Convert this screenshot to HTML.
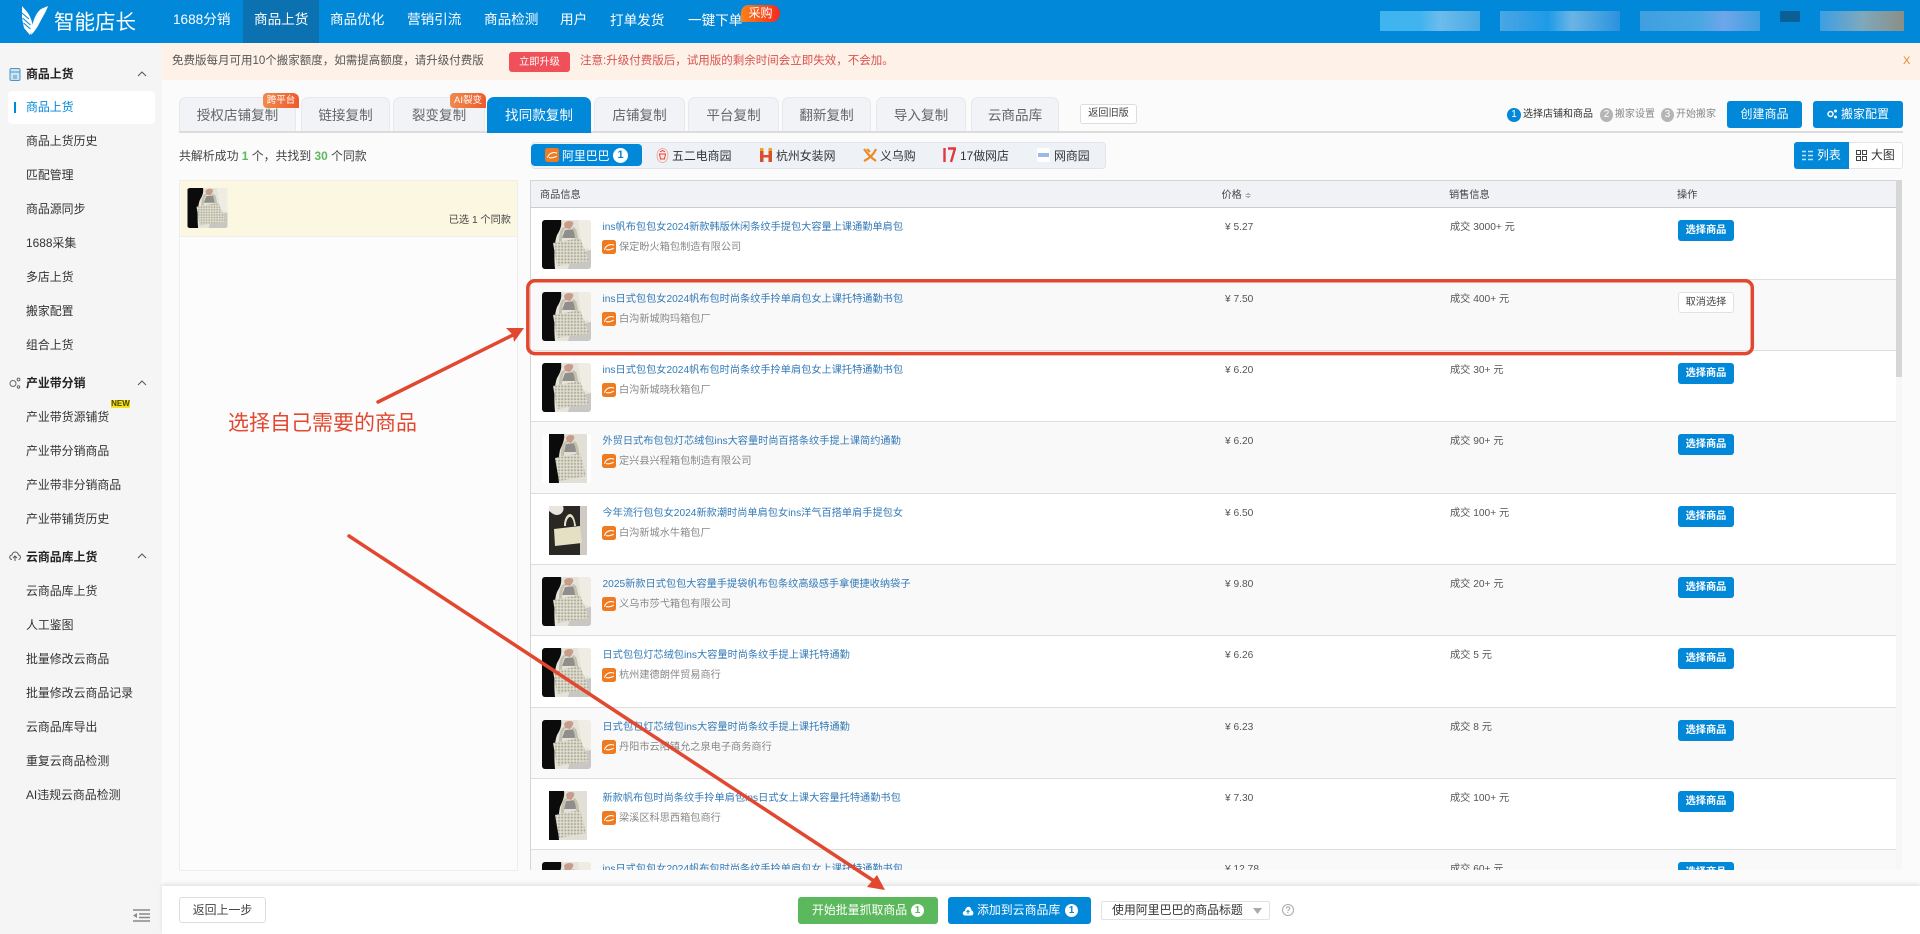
<!DOCTYPE html>
<html lang="zh-CN"><head><meta charset="utf-8"><title>智能店长</title>
<style>
*{box-sizing:border-box}
html,body{margin:0;padding:0;width:1920px;height:934px;overflow:hidden;background:#fbfbfb}
body{font-family:"Liberation Sans","Noto Sans CJK SC",sans-serif;font-size:12px;color:#333;position:relative}
.a,.a *{white-space:nowrap}
.a{position:absolute}
#hd{left:0;top:0;width:1920px;height:43px;background:#0288d9}
.n{color:#fff;font-size:13.6px;line-height:20px;top:10px}
.bl{top:11px;height:20px}
#sb{left:0;top:43px;width:162px;height:891px;background:#f5f5f5}
.s{left:26px;line-height:16px;font-size:11.9px;color:#333}
.g{font-weight:bold;color:#222}
.tab{top:97px;height:34px;background:#f1f3f6;border:1px solid #e6e8ec;border-bottom:none;border-radius:7px 7px 0 0;text-align:center;line-height:36px;font-size:13.6px;color:#666}
.tb{color:#fff;font-size:9.5px;line-height:15px;height:15px;text-align:center;border-radius:4px 6px 0 4px;background:linear-gradient(90deg,#f08a4e,#ee5b2c);top:93px}
.cir{border-radius:50%;text-align:center;color:#fff}
.btn{background:#0288d9;color:#fff;text-align:center;border-radius:3px}
.pt{top:149px;line-height:16px;font-size:11.9px;color:#333}
.r{left:0;width:1365px;height:71.33px;border-bottom:1px solid #ddd;background:#fff}
.r.o{background:#f9f9f9}
.r .t{position:absolute;left:71.5px;top:13px;line-height:14px;font-size:10.2px;color:#337ab7}
.r .sh{position:absolute;left:88px;top:33px;line-height:14px;font-size:10.2px;color:#888}
.r .ic{position:absolute;left:71px;top:32px;width:14px;height:14px}
.r .p{position:absolute;left:694px;top:13px;line-height:14px;font-size:10.2px;color:#555}
.r .v{position:absolute;left:919px;top:13px;line-height:14px;font-size:10.2px;color:#555}
.r .b{position:absolute;left:1147px;top:12px;width:56px;height:21px;line-height:21px;text-align:center;font-size:10.2px;color:#fff;background:#0288d9;border-radius:3px;font-weight:bold}
.r .b.c{background:#fff;color:#444;border:1px solid #e2e2e2;line-height:19px;font-weight:normal}
.r svg.th{position:absolute;left:11px;top:12px;width:49px;height:49px;border-radius:3px}
.hh{line-height:14px;font-size:10.2px;color:#444;position:absolute;top:7.5px}
</style></head><body>
<svg width="0" height="0" style="position:absolute"><defs>
<pattern id="dt" width="3.2" height="3.2" patternUnits="userSpaceOnUse"><rect width="3.2" height="3.2" fill="#d8d6c6"/><circle cx="1" cy="1" r=".9" fill="#a8a694"/><circle cx="2.6" cy="2.6" r=".5" fill="#efeee2"/></pattern>
<symbol id="bag" viewBox="0 0 49 49"><rect width="49" height="49" fill="#e6e3da"/><path d="M36 0h13v30l-9-4z" fill="#efece4"/><path d="M30 34l19-4v19H26z" fill="#c9c7c3"/><path d="M0 0h19c1 6-1 10-4 15-3 8-3 22-2 34H0z" fill="#0c0b0b"/><path d="M20 18l3-8 11-1 2 9z" fill="#8f8e8a"/><path d="M17 22c0-8 1-13 5-15l2 1c-3 2-4 7-4 14zM33 20c0-5-1-9-3-12l2-1c3 3 4 8 4 13z" fill="#c4c1ae"/><path d="M22 4c1-3 6-4 9-2 1 2-1 5-3 7l-5-1z" fill="#c79c8b"/><path d="M11 23l27-5 9 23-32 5z" fill="url(#dt)"/></symbol>
<symbol id="bagb" viewBox="0 0 49 49"><rect width="49" height="49" fill="#fff"/><rect x="7" width="38" height="49" fill="#e2dfd6"/><path d="M7 0h15c1 6-2 11-4 16-2 9-2 22-1 33H7z" fill="#0c0b0b"/><path d="M22 18l2-8 9-1 2 9z" fill="#8f8e8a"/><path d="M19 22c0-8 1-13 5-15l2 1c-3 2-4 7-4 14zM34 20c0-5-1-9-3-12l2-1c3 3 4 8 4 13z" fill="#c4c1ae"/><path d="M24 4c1-3 5-4 8-2 1 2-1 5-3 7l-4-1z" fill="#c79c8b"/><path d="M13 24l25-5 6 23-27 5z" fill="url(#dt)"/></symbol>
<symbol id="bagc" viewBox="0 0 49 49"><rect width="49" height="49" fill="#fff"/><rect x="7" width="38" height="49" fill="#2a2825"/><rect x="38" width="7" height="49" fill="#cfcac2"/><path d="M7 0h14c2 5-2 9-6 9-4 0-6-3-8-4z" fill="#e9e4dc"/><path d="M22 20c0-7 3-12 6-12s5 5 6 12h-2c0-5-2-9-4-9s-4 4-4 9z" fill="#e5dfc8"/><path d="M12 23l26-3 2 17-27 3z" fill="#e5dfc4"/></symbol>
<symbol id="ali" viewBox="0 0 14 14"><rect width="14" height="14" rx="2.5" fill="#f07a20"/><path d="M2.6 9.4C3.6 6 7 4.2 10 4.6c1 .1 1.6.5 1.6.5M4.4 9.6c2 .6 4.4.1 7-1.3" fill="none" stroke="#fff" stroke-width="1.1" stroke-linecap="round"/></symbol>
</defs></svg>

<div class="a" id="hd"></div>
<svg class="a" style="left:0;top:0" width="50" height="43" viewBox="0 0 50 43"><path d="M22 6l6 7c3 5 5 11 5 16l-3 6-6-7-2-10z" fill="#fff"/><path d="M22 13l7 6M22.500 18l8 7M23.500 23l7 6" stroke="#0288d9" stroke-width="1"/><path d="M48 6l-7 3c-5 4-8 11-9 19l-1 7c3-3 6-7 8-11 3-6 7-12 9-18z" fill="#fff"/></svg>
<div class="a" style="left:54px;top:9px;line-height:28px;font-size:20.5px;color:#fff">智能店长</div>
<div class="a" style="left:243px;top:0;width:76px;height:43px;background:#0b71b1"></div>
<div class="a n" style="left:173px">1688分销</div>
<div class="a n" style="left:254px">商品上货</div>
<div class="a n" style="left:330px">商品优化</div>
<div class="a n" style="left:407px">营销引流</div>
<div class="a n" style="left:484px">商品检测</div>
<div class="a n" style="left:560px">用户</div>
<div class="a n" style="left:610px;top:11px">打单发货</div>
<div class="a n" style="left:688px;top:11px">一键下单</div>
<div class="a" style="left:741px;top:5px;width:39px;height:17px;border-radius:8px 9px 9px 0;background:linear-gradient(90deg,#f8821a,#f52a1e);color:#fff;font-size:12px;line-height:16px;text-align:center">采购</div>
<div class="a bl" style="left:1380px;width:100px;background:linear-gradient(90deg,#3fb4ee 0,#3fb4ee 40%,#6cbcec 60%,#4aa9e3 100%)"></div>
<div class="a bl" style="left:1500px;width:120px;background:linear-gradient(90deg,#4aa6e4,#1f9ae6 40%,#6bb5e5 60%,#2a92de)"></div>
<div class="a bl" style="left:1640px;width:120px;background:linear-gradient(90deg,#3f9fe0,#49a7e3 50%,#6fa6ea 70%,#3f9fe0)"></div>
<div class="a" style="left:1780px;top:11px;width:20px;height:11px;background:#0a5f96"></div>
<div class="a bl" style="left:1820px;width:84px;background:linear-gradient(90deg,#3c9fe3,#7fa8bd 50%,#8a8f86)"></div>

<div class="a" id="sb"></div>
<svg class="a" style="left:9px;top:68px" width="12" height="13" viewBox="0 0 12 13"><rect x="1" y=".5" width="10" height="12" rx="1.5" fill="#cfe3f3" stroke="#4a94c9"/><path d="M1 4h10M4 8h4M4 10h4" stroke="#4a94c9"/></svg>
<div class="a s g" style="top:66px">商品上货</div>
<svg class="a" style="left:137px;top:71px" width="10" height="6"><path d="M1 5l4-4 4 4" fill="none" stroke="#555"/></svg>
<div class="a" style="left:8px;top:91px;width:147px;height:33px;background:#fff;border-radius:4px"></div>
<div class="a" style="left:14px;top:102px;width:2px;height:11px;background:#0288d9"></div>
<div class="a s" style="top:99px;color:#0288d9">商品上货</div>
<div class="a s" style="top:133px">商品上货历史</div>
<div class="a s" style="top:167px">匹配管理</div>
<div class="a s" style="top:201px">商品源同步</div>
<div class="a s" style="top:235px">1688采集</div>
<div class="a s" style="top:269px">多店上货</div>
<div class="a s" style="top:303px">搬家配置</div>
<div class="a s" style="top:337px">组合上货</div>
<svg class="a" style="left:9px;top:377px" width="12" height="12" viewBox="0 0 12 12"><circle cx="4" cy="6.500" r="3" fill="none" stroke="#666"/><circle cx="9.500" cy="2.500" r="1.400" fill="none" stroke="#666"/><circle cx="9.500" cy="10" r="1.200" fill="none" stroke="#666"/></svg>
<div class="a s g" style="top:375px">产业带分销</div>
<svg class="a" style="left:137px;top:380px" width="10" height="6"><path d="M1 5l4-4 4 4" fill="none" stroke="#555"/></svg>
<div class="a s" style="top:409px">产业带货源铺货</div>
<div class="a" style="left:111px;top:400px;width:19px;height:8px;background:#f7e21b;color:#4a4400;font-size:8px;line-height:8px;font-weight:bold;text-align:center">NEW</div>
<div class="a s" style="top:443px">产业带分销商品</div>
<div class="a s" style="top:477px">产业带非分销商品</div>
<div class="a s" style="top:511px">产业带铺货历史</div>
<svg class="a" style="left:9px;top:550px" width="12" height="12" viewBox="0 0 12 12"><path d="M3 9.500C0 9.500 0 5 3 5c.5-4 6-4 6.500 0 2.500 0 2.500 4.500 0 4.500M6 11V6M4 8l2-2 2 2" fill="none" stroke="#555"/></svg>
<div class="a s g" style="top:549px">云商品库上货</div>
<svg class="a" style="left:137px;top:553px" width="10" height="6"><path d="M1 5l4-4 4 4" fill="none" stroke="#555"/></svg>
<div class="a s" style="top:583px">云商品库上货</div>
<div class="a s" style="top:617px">人工鉴图</div>
<div class="a s" style="top:651px">批量修改云商品</div>
<div class="a s" style="top:685px">批量修改云商品记录</div>
<div class="a s" style="top:719px">云商品库导出</div>
<div class="a s" style="top:753px">重复云商品检测</div>
<div class="a s" style="top:787px">AI违规云商品检测</div>
<svg class="a" style="left:133px;top:909px" width="17" height="13" viewBox="0 0 17 13"><path d="M0 1h17M6 5h11M6 8.500h11M0 12h17" stroke="#8a8a8a" stroke-width="1.500"/><path d="M4 4v5L0 6.500z" fill="#8a8a8a"/></svg>

<div class="a" style="left:162px;top:43px;width:1758px;height:37px;background:#fdf1e8"></div>
<div class="a" style="left:172px;top:53px;line-height:16px;font-size:11.500px;color:#555">免费版每月可用10个搬家额度，如需提高额度，请升级付费版</div>
<div class="a" style="left:509px;top:52px;width:61px;height:20px;background:#f0505a;border-radius:3px;color:#fff;font-size:10.200px;line-height:21px;text-align:center">立即升级</div>
<div class="a" style="left:580px;top:53px;line-height:16px;font-size:11.500px;color:#d9534f">注意:升级付费版后，试用版的剩余时间会立即失效，不会加。</div>
<div class="a" style="left:1903px;top:53px;line-height:16px;font-size:11px;color:#e8862e">X</div>

<div class="a" style="left:179px;top:131px;width:1724px;height:2px;background:#dcdcdc"></div>
<div class="a tab" style="left:179px;width:117px">授权店铺复制</div>
<div class="a tab" style="left:301px;width:89px">链接复制</div>
<div class="a tab" style="left:393px;width:92px">裂变复制</div>
<div class="a tab" style="left:487px;width:104px;height:36px;background:#0288d9;border-color:#0288d9;color:#fff">找同款复制</div>
<div class="a tab" style="left:594px;width:91px">店铺复制</div>
<div class="a tab" style="left:688px;width:91px">平台复制</div>
<div class="a tab" style="left:782px;width:89px">翻新复制</div>
<div class="a tab" style="left:876px;width:90px">导入复制</div>
<div class="a tab" style="left:971px;width:88px">云商品库</div>
<div class="a tb" style="left:263px;width:36px">跨平台</div>
<div class="a tb" style="left:450px;width:36px">AI裂变</div>
<div class="a" style="left:1080px;top:104px;width:57px;height:20px;background:#fff;border:1px solid #ddd;border-radius:3px;font-size:10.200px;line-height:18px;text-align:center;color:#444">返回旧版</div>

<div class="a cir" style="left:1507px;top:108px;width:14px;height:14px;background:#0288d9;font-size:10px;line-height:14px">1</div>
<div class="a" style="left:1523px;top:108px;line-height:14px;font-size:10px;color:#333">选择店铺和商品</div>
<div class="a cir" style="left:1600px;top:108px;width:13px;height:14px;background:#b5b5b5;font-size:10px;line-height:14px">2</div>
<div class="a" style="left:1615px;top:108px;line-height:14px;font-size:10px;color:#888">搬家设置</div>
<div class="a cir" style="left:1661px;top:108px;width:13px;height:14px;background:#b5b5b5;font-size:10px;line-height:14px">3</div>
<div class="a" style="left:1676px;top:108px;line-height:14px;font-size:10px;color:#888">开始搬家</div>
<div class="a btn" style="left:1727px;top:101px;width:75px;height:27px;line-height:27px">创建商品</div>
<div class="a btn" style="left:1813px;top:101px;width:90px;height:27px;line-height:27px"><svg width="11" height="10" viewBox="0 0 11 10" style="vertical-align:-1px;margin-right:3px"><circle cx="3.500" cy="5" r="2.500" fill="none" stroke="#fff" stroke-width="1.500"/><circle cx="8.500" cy="2" r="1.500" fill="#fff"/><circle cx="8.500" cy="8" r="1.500" fill="#fff"/></svg>搬家配置</div>

<div class="a" style="left:179px;top:148px;line-height:16px;font-size:11.900px;color:#444">共解析成功 <b style="color:#5cb85c">1</b> 个，共找到 <b style="color:#5cb85c">30</b> 个同款</div>

<div class="a" style="left:531px;top:142px;width:575px;height:27px;background:#eef2f7;border:1px solid #e0e4ea;border-radius:4px"></div>
<div class="a" style="left:531px;top:144px;width:111px;height:22px;background:#0288d9;border-radius:4px"></div>
<svg class="a" style="left:545px;top:148px" width="14" height="14"><use href="#ali"/></svg>
<div class="a pt" style="left:562px;top:148px;color:#fff">阿里巴巴</div>
<div class="a cir" style="left:613px;top:148px;width:15px;height:15px;background:#fff;color:#0288d9;font-size:11px;line-height:15px;font-weight:bold">1</div>
<svg class="a" style="left:656px;top:148px" width="13" height="15" viewBox="0 0 13 15"><ellipse cx="6.500" cy="7.500" rx="5.500" ry="7" fill="#fdeeee" stroke="#e9b0b0"/><path d="M3.500 6h6l-1 5h-4zM4 4l2.500-1.500L9 4" fill="none" stroke="#d9413c"/></svg>
<div class="a pt" style="left:672px;top:148px">五二电商园</div>
<svg class="a" style="left:760px;top:148px" width="12" height="14" viewBox="0 0 12 14"><path d="M0 2h3.500v5h5V2H12v12H8.500V9.500h-5V14H0z" fill="#d9512c"/><path d="M0 0h3.500v3H0zM8.500 0H12v3H8.500z" fill="#eea323"/></svg>
<div class="a pt" style="left:776px;top:148px">杭州女装网</div>
<svg class="a" style="left:863px;top:148px" width="14" height="14" viewBox="0 0 14 14"><path d="M1 1c3 4 6 8 12 12M13 1C11 6 7 10 1 13M4 1l3 3" fill="none" stroke="#ec8a22" stroke-width="2.200"/></svg>
<div class="a pt" style="left:880px;top:148px">义乌购</div>
<svg class="a" style="left:943px;top:147px" width="13" height="16" viewBox="0 0 13 16"><path d="M1.500 1v14M5 1.500h7L8 15" fill="none" stroke="#e2383f" stroke-width="2.400"/></svg>
<div class="a pt" style="left:960px;top:148px">17做网店</div>
<div class="a" style="left:1037px;top:148px;width:13px;height:14px;background:#fff;border-radius:2px"><div style="margin:5px 1px 0;height:4px;background:#9db9ea"></div></div>
<div class="a pt" style="left:1054px;top:148px">网商园</div>

<div class="a" style="left:1794px;top:142px;width:109px;height:27px;background:#fff;border:1px solid #e4e4e4;border-radius:3px"></div>
<div class="a" style="left:1794px;top:142px;width:55px;height:27px;background:#0288d9;border-radius:3px 0 0 3px"></div>
<svg class="a" style="left:1802px;top:150px" width="11" height="11"><path d="M0 1.500h4M6 1.500h5M0 5.500h4M6 5.500h5M0 9.500h4M6 9.500h5" stroke="#bfe2f7" stroke-width="1.500"/></svg>
<div class="a" style="left:1817px;top:147px;line-height:16px;color:#fff;font-size:11.900px">列表</div>
<svg class="a" style="left:1856px;top:150px" width="11" height="11"><path d="M.5.500h4v4h-4zM6.500.500h4v4h-4zM.5 6.500h4v4h-4zM6.500 6.500h4v4h-4z" fill="none" stroke="#444"/></svg>
<div class="a" style="left:1871px;top:147px;line-height:16px;color:#333;font-size:11.900px">大图</div>

<div class="a" style="left:179px;top:180px;width:339px;height:691px;background:#fcfcfc;border:1px solid #eeeeee"></div>
<div class="a" style="left:180px;top:181px;width:337px;height:56px;background:#fbf7e1;border-bottom:1px solid #eee"></div>
<svg class="a" style="left:187px;top:188px;border-radius:3px" width="41" height="40"><use href="#bag"/></svg>
<div class="a" style="right:1409px;top:213px;line-height:16px;font-size:10.200px;color:#444">已选 1 个同款</div>

<div class="a" style="left:530px;top:180px;width:1372px;height:690px;overflow:hidden;border-left:1px solid #d5d5d5">
<div class="a" style="left:0;top:0;width:1365px;height:28.300px;background:#f0f2f5;border-top:1px solid #d5d5d5;border-bottom:1px solid #ccc">
<div class="hh" style="left:9px">商品信息</div><div class="hh" style="left:690.500px">价格 <span style="font-size:8px;color:#666">≑</span></div><div class="hh" style="left:918px">销售信息</div><div class="hh" style="left:1146px">操作</div></div>

<div class="a r" style="top:28.300px"><svg class="th"><use href="#bag"/></svg><div class="t">ins帆布包包女2024新款韩版休闲条纹手提包大容量上课通勤单肩包</div><svg class="ic"><use href="#ali"/></svg><div class="sh">保定盼火箱包制造有限公司</div><div class="p">¥ 5.27</div><div class="v">成交 3000+ 元</div><div class="b">选择商品</div></div>
<div class="a r o" style="top:99.630px"><svg class="th"><use href="#bag"/></svg><div class="t">ins日式包包女2024帆布包时尚条纹手拎单肩包女上课托特通勤书包</div><svg class="ic"><use href="#ali"/></svg><div class="sh">白沟新城购玛箱包厂</div><div class="p">¥ 7.50</div><div class="v">成交 400+ 元</div><div class="b c">取消选择</div></div>
<div class="a r" style="top:170.960px"><svg class="th"><use href="#bag"/></svg><div class="t">ins日式包包女2024帆布包时尚条纹手拎单肩包女上课托特通勤书包</div><svg class="ic"><use href="#ali"/></svg><div class="sh">白沟新城晓秋箱包厂</div><div class="p">¥ 6.20</div><div class="v">成交 30+ 元</div><div class="b">选择商品</div></div>
<div class="a r o" style="top:242.290px"><svg class="th"><use href="#bagb"/></svg><div class="t">外贸日式布包包灯芯绒包ins大容量时尚百搭条纹手提上课简约通勤</div><svg class="ic"><use href="#ali"/></svg><div class="sh">定兴县兴程箱包制造有限公司</div><div class="p">¥ 6.20</div><div class="v">成交 90+ 元</div><div class="b">选择商品</div></div>
<div class="a r" style="top:313.620px"><svg class="th"><use href="#bagc"/></svg><div class="t">今年流行包包女2024新款潮时尚单肩包女ins洋气百搭单肩手提包女</div><svg class="ic"><use href="#ali"/></svg><div class="sh">白沟新城水牛箱包厂</div><div class="p">¥ 6.50</div><div class="v">成交 100+ 元</div><div class="b">选择商品</div></div>
<div class="a r o" style="top:384.950px"><svg class="th"><use href="#bag"/></svg><div class="t">2025新款日式包包大容量手提袋帆布包条纹高级感手拿便捷收纳袋子</div><svg class="ic"><use href="#ali"/></svg><div class="sh">义乌市莎弋箱包有限公司</div><div class="p">¥ 9.80</div><div class="v">成交 20+ 元</div><div class="b">选择商品</div></div>
<div class="a r" style="top:456.280px"><svg class="th"><use href="#bag"/></svg><div class="t">日式包包灯芯绒包ins大容量时尚条纹手提上课托特通勤</div><svg class="ic"><use href="#ali"/></svg><div class="sh">杭州建德朗伴贸易商行</div><div class="p">¥ 6.26</div><div class="v">成交 5 元</div><div class="b">选择商品</div></div>
<div class="a r o" style="top:527.610px"><svg class="th"><use href="#bag"/></svg><div class="t">日式包包灯芯绒包ins大容量时尚条纹手提上课托特通勤</div><svg class="ic"><use href="#ali"/></svg><div class="sh">丹阳市云阳镇允之泉电子商务商行</div><div class="p">¥ 6.23</div><div class="v">成交 8 元</div><div class="b">选择商品</div></div>
<div class="a r" style="top:598.940px"><svg class="th"><use href="#bagb"/></svg><div class="t">新款帆布包时尚条纹手拎单肩包ins日式女上课大容量托特通勤书包</div><svg class="ic"><use href="#ali"/></svg><div class="sh">梁溪区科思西箱包商行</div><div class="p">¥ 7.30</div><div class="v">成交 100+ 元</div><div class="b">选择商品</div></div>
<div class="a r o" style="top:670.270px"><svg class="th"><use href="#bag"/></svg><div class="t">ins日式包包女2024帆布包时尚条纹手拎单肩包女上课托特通勤书包</div><svg class="ic"><use href="#ali"/></svg><div class="sh">白沟新城购玛箱包厂</div><div class="p">¥ 12.78</div><div class="v">成交 60+ 元</div><div class="b">选择商品</div></div>
<div class="a" style="left:1365px;top:0;width:7px;height:690px;background:#f7f7f7"></div>
<div class="a" style="left:1365px;top:0;width:7px;height:197px;background:#d6d6d6"></div>
</div>

<div class="a" style="left:162px;top:886px;width:1758px;height:48px;background:#fff;box-shadow:0 -2px 4px rgba(0,0,0,.1)"></div>
<div class="a" style="left:179px;top:897px;width:87px;height:26px;background:#fff;border:1px solid #ddd;border-radius:3px;line-height:24px;text-align:center;color:#444;font-size:11.900px">返回上一步</div>
<div class="a" style="left:798px;top:897px;width:140px;height:27px;background:#5cb85c;border-radius:3px"></div>
<div class="a" style="left:812px;top:902px;line-height:17px;font-size:11.900px;color:#fff">开始批量抓取商品</div>
<div class="a cir" style="left:911px;top:904px;width:13px;height:13px;background:#fff;color:#5cb85c;font-size:10px;line-height:13px;font-weight:bold">1</div>
<div class="a" style="left:948px;top:897px;width:143px;height:27px;background:#0288d9;border-radius:3px"></div>
<svg class="a" style="left:962px;top:905px" width="12" height="11" viewBox="0 0 12 11"><path d="M3 10.500C0 10.500 0 6 3 6c.5-5 6-6 6.500-.5C12 6 12 10.500 9.500 10.500z" fill="#fff"/><path d="M6 9V5.500M4.500 7L6 5.500 7.500 7" fill="none" stroke="#0288d9"/></svg>
<div class="a" style="left:977px;top:902px;line-height:17px;font-size:11.900px;color:#fff">添加到云商品库</div>
<div class="a cir" style="left:1065px;top:904px;width:13px;height:13px;background:#fff;color:#0288d9;font-size:10px;line-height:13px;font-weight:bold">1</div>
<div class="a" style="left:1101px;top:901px;width:169px;height:19px;background:#fff;border:1px solid #e2e2e2;border-radius:2px"></div>
<div class="a" style="left:1112px;top:902px;line-height:17px;font-size:11.900px;color:#333">使用阿里巴巴的商品标题</div>
<svg class="a" style="left:1253px;top:908px" width="9" height="6"><path d="M0 0h9L4.500 6z" fill="#aaa"/></svg>
<div class="a cir" style="left:1282px;top:904px;width:12px;height:12px;border:1px solid #aaa;color:#888;font-size:9px;line-height:10px">?</div>

<svg class="a" style="left:0;top:0" width="1920" height="934" viewBox="0 0 1920 934">
<rect x="527.800" y="280.800" width="1224.500" height="72.800" rx="7" fill="none" stroke="#e2472f" stroke-width="3.500"/>
<path d="M378 402L515 334" stroke="#e2472f" stroke-width="3.500" stroke-linecap="round"/>
<path d="M506 328L524 328L514 342L513 335z" fill="#e2472f"/>
<path d="M349 536L874 881" stroke="#e2472f" stroke-width="3.500" stroke-linecap="round"/>
<path d="M885 890L867 887L872 881L877 875z" fill="#e2472f"/>
</svg>
<div class="a" style="left:228px;top:408px;line-height:32px;font-size:21px;color:#e2472f">选择自己需要的商品</div>
</body></html>
